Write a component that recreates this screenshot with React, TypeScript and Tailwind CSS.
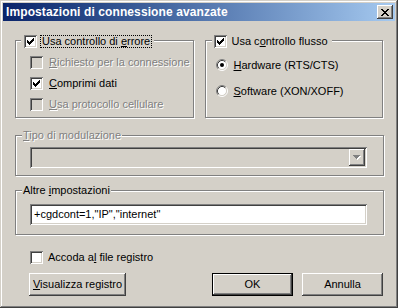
import React from "react";

const sunken =
  "shadow-[inset_1px_1px_0_#808080,inset_-1px_-1px_0_#ffffff,inset_2px_2px_0_#404040,inset_-2px_-2px_0_#d4d0c8]";
const raised =
  "shadow-[inset_-1px_-1px_0_#404040,inset_1px_1px_0_#ffffff,inset_-2px_-2px_0_#808080,inset_2px_2px_0_#d4d0c8]";
const etched = "border border-[#808080] shadow-[inset_1px_1px_0_#ffffff,1px_1px_0_#ffffff]";
const disabledText = "text-[#808080] [text-shadow:1px_1px_0_#ffffff]";

const CheckBox: React.FC<{ checked?: boolean; disabled?: boolean }> = ({ checked, disabled }) => (
  <span
    className={`w-[13px] h-[13px] shrink-0 flex items-center justify-center ${sunken} ${
      disabled ? "bg-[#d4d0c8]" : "bg-white"
    }`}>
    {checked && (
      <svg width="7" height="7" viewBox="0 0 7 7" shapeRendering="crispEdges">
        <path
          d="M6 0h1v1h-1z M5 1h2v1h-2z M0 2h1v1h-1z M4 2h3v1h-3z M0 3h2v1h-2z M3 3h3v1h-3z M0 4h5v1h-5z M1 5h3v1h-3z M2 6h1v1h-1z"
          fill="#000"
        />
      </svg>
    )}
  </span>
);

const Radio: React.FC<{ checked?: boolean }> = ({ checked }) => (
  <svg width="12" height="12" viewBox="0 0 12 12" className="shrink-0">
    <circle cx="6" cy="6" r="4.5" fill="#fff" />
    <path d="M2.11 9.89 A5.5 5.5 0 0 1 9.89 2.11" stroke="#808080" fill="none" />
    <path d="M9.89 2.11 A5.5 5.5 0 0 1 2.11 9.89" stroke="#fff" fill="none" />
    <path d="M2.82 9.18 A4.5 4.5 0 0 1 9.18 2.82" stroke="#404040" fill="none" />
    <path d="M9.18 2.82 A4.5 4.5 0 0 1 2.82 9.18" stroke="#d4d0c8" fill="none" />
    {checked && <circle cx="6" cy="6" r="2" fill="#000" />}
  </svg>
);

const Row: React.FC<{ children: React.ReactNode; disabled?: boolean; checked?: boolean }> = ({
  children,
  disabled,
  checked,
}) => (
  <div className="flex items-center h-[13px]">
    <CheckBox checked={checked} disabled={disabled} />
    <span className={`ml-[6px] ${disabled ? disabledText : ""}`}>{children}</span>
  </div>
);

export default function App() {
  return (
    <div className="w-[398px] h-[308px] bg-[#d4d0c8] p-[3px] flex flex-col shadow-[inset_-1px_-1px_0_#404040,inset_1px_1px_0_#d4d0c8,inset_-2px_-2px_0_#808080,inset_2px_2px_0_#ffffff] font-['Liberation_Sans',Arial,sans-serif] text-[11px] leading-[13px] text-black">
      <div className="h-[18px] shrink-0 flex items-center justify-between pl-[3px] pr-[2px] bg-linear-to-r from-[#0a246a] to-[#a6caf0]">
        <span className="text-white font-bold text-[12px] tracking-[0.1px]">Impostazioni di connessione avanzate</span>
        <span className={`w-[16px] h-[14px] bg-[#d4d0c8] ${raised} flex items-center justify-center`}>
          <svg width="8" height="7" viewBox="0 0 8 7" shapeRendering="crispEdges">
            <path
              d="M0 0h2v1h-2z M6 0h2v1h-2z M1 1h2v1h-2z M5 1h2v1h-2z M2 2h4v1h-4z M3 3h2v1h-2z M2 4h4v1h-4z M1 5h2v1h-2z M5 5h2v1h-2z M0 6h2v1h-2z M6 6h2v1h-2z"
              fill="#000"
            />
          </svg>
        </span>
      </div>

      <div className="flex-1 flex flex-col px-[12px]">
        <div className="flex mt-[19px] gap-[11px]">
          {/* controllo errore */}
          <div className={`w-[179px] h-[78px] ${etched} flex flex-col`}>
            <div className="-mt-[6px] ml-[5px] pl-[3px] pr-[2px] bg-[#d4d0c8] self-start flex items-center h-[13px]">
              <CheckBox checked />
              <span className="ml-[3px] pl-[1px] pr-[1px] h-[13px] border border-dotted border-black leading-[11px]">
                Usa controllo di <u>e</u>rrore
              </span>
            </div>
            <div className="flex flex-col gap-[8px] mt-[8px] ml-[14px]">
              <Row disabled>
                <u>R</u>ichiesto per la connessione
              </Row>
              <Row checked>
                <u>C</u>omprimi dati
              </Row>
              <Row disabled>
                <u>U</u>sa protocollo cellulare
              </Row>
            </div>
          </div>

          {/* controllo flusso */}
          <div className={`w-[179px] h-[78px] ${etched} flex flex-col`}>
            <div className="-mt-[6px] ml-[6px] pl-[2px] pr-[4px] bg-[#d4d0c8] self-start flex items-center h-[13px]">
              <CheckBox checked />
              <span className="ml-[5px]">
                Usa c<u>o</u>ntrollo flusso
              </span>
            </div>
            <div className="flex flex-col gap-[14px] mt-[11px] ml-[10px]">
              <div className="flex items-center h-[12px]">
                <Radio checked />
                <span className="ml-[6px]">
                  <u>H</u>ardware (RTS/CTS)
                </span>
              </div>
              <div className="flex items-center h-[12px]">
                <Radio />
                <span className="ml-[6px]">
                  <u>S</u>oftware (XON/XOFF)
                </span>
              </div>
            </div>
          </div>
        </div>

        {/* modulazione */}
        <div className={`w-[369px] h-[41px] mt-[17px] ${etched} flex flex-col`}>
          <span className={`-mt-[7px] ml-[6px] px-[1px] bg-[#d4d0c8] self-start h-[13px] ${disabledText}`}>
            <u>T</u>ipo di modulazione
          </span>
          <div className={`mt-[5px] ml-[14px] w-[337px] h-[21px] bg-[#d4d0c8] ${sunken} p-[2px] flex justify-end`}>
            <span className={`w-[16px] h-[17px] ${raised} flex items-center justify-center`}>
              <svg width="8" height="5" viewBox="0 0 8 5" shapeRendering="crispEdges">
                <path d="M1 1h7v1h-7z M2 2h5v1h-5z M3 3h3v1h-3z M4 4h1v1h-1z" fill="#fff" />
                <path d="M0 0h7v1h-7z M1 1h5v1h-5z M2 2h3v1h-3z M3 3h1v1h-1z" fill="#808080" />
              </svg>
            </span>
          </div>
        </div>

        {/* altre impostazioni */}
        <div className={`w-[369px] h-[45px] mt-[14px] ${etched} flex flex-col`}>
          <span className="-mt-[7px] ml-[6px] px-[1px] bg-[#d4d0c8] self-start h-[13px]">
            Altre <u>i</u>mpostazioni
          </span>
          <div className={`mt-[7px] ml-[14px] w-[337px] h-[21px] bg-white ${sunken} pl-[4px] flex items-center`}>
            +cgdcont=1,"IP","internet"
          </div>
        </div>

        <div className="flex items-center h-[13px] mt-[16px] ml-[15px]">
          <CheckBox />
          <span className="ml-[5px]">
            Accoda a<u>l</u> file registro
          </span>
        </div>

        <div className="flex mt-[9px] ml-[14px]">
          <button className={`w-[97px] h-[23px] ${raised} flex items-center justify-center`}>
            <span>
              <u>V</u>isualizza registro
            </span>
          </button>
          <button className="ml-auto w-[81px] h-[23px] border border-black flex">
            <span className={`flex-1 ${raised} flex items-center justify-center`}>OK</span>
          </button>
          <button className={`ml-[9px] w-[81px] h-[23px] ${raised} flex items-center justify-center`}>
            Annulla
          </button>
        </div>
      </div>
    </div>
  );
}
